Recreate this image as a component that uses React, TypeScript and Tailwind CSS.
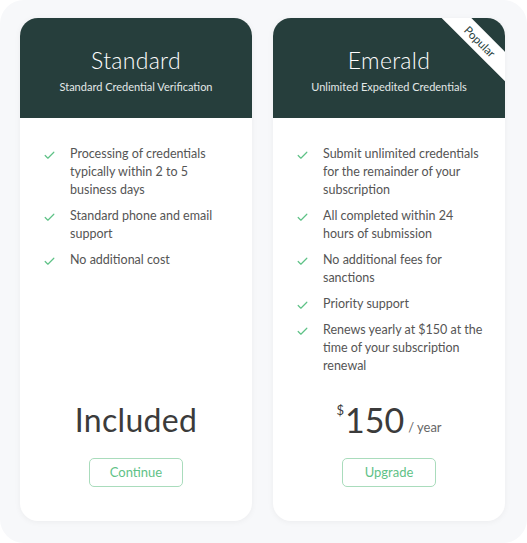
import { Check } from 'lucide-react'

interface Plan {
  name: string
  subtitle: string
  features: string[]
  cta: string
  popular?: boolean
}

const plans: Plan[] = [
  {
    name: 'Standard',
    subtitle: 'Standard Credential Verification',
    features: [
      'Processing of credentials typically within 2 to 5 business days',
      'Standard phone and email support',
      'No additional cost',
    ],
    cta: 'Continue',
  },
  {
    name: 'Emerald',
    subtitle: 'Unlimited Expedited Credentials',
    features: [
      'Submit unlimited credentials for the remainder of your subscription',
      'All completed within 24 hours of submission',
      'No additional fees for sanctions',
      'Priority support',
      'Renews yearly at $150 at the time of your subscription renewal',
    ],
    cta: 'Upgrade',
    popular: true,
  },
]

function PlanCard({ plan }: { plan: Plan }) {
  return (
    <div className="relative flex w-[232px] flex-col overflow-hidden rounded-[18px] bg-white shadow-[0_1px_6px_rgba(0,0,0,0.05)]">
      <div className="flex h-[100px] flex-col items-center justify-center bg-[#263e3c] pt-[4px] text-white">
        <h2 className="text-[23px] font-light leading-[28px] tracking-[0.3px]">{plan.name}</h2>
        <p className="mt-[6px] text-[11px] leading-[14px] text-[#e3e9e8]">{plan.subtitle}</p>
      </div>
      {plan.popular && (
        <div className="absolute right-[-27px] top-[13px] w-[104px] rotate-45 bg-white text-center text-[11.5px] leading-[21px] text-[#263e3c]">
          Popular
        </div>
      )}
      <ul className="flex flex-col gap-[8px] pl-[23px] pr-[20px] pt-[27px]">
        {plan.features.map(f => (
          <li key={f} className="flex items-start gap-[14px]">
            <Check className="mt-[4px] h-[13px] w-[13px] shrink-0 text-[#5fc287]" strokeWidth={2.2} />
            <span className="text-[12.5px] leading-[18px] text-[#555]">{f}</span>
          </li>
        ))}
      </ul>
      <div className="mt-auto flex flex-col items-center pb-[34px]">
        {plan.popular ? (
          <div className="flex items-end text-[#3b3b3b]">
            <span className="mb-[23px] mr-[1px] text-[13px] leading-none">$</span>
            <span className="text-[34px] leading-[40px]">150</span>
            <span className="mb-[6px] ml-[4px] text-[13px] leading-none text-[#666]">/ year</span>
          </div>
        ) : (
          <div className="text-[32px] leading-[40px] tracking-[0.3px] text-[#3b3b3b]">Included</div>
        )}
        <button className="mt-[18px] h-[29px] w-[94px] rounded-[5px] border border-[#a9dcbc] text-[13px] text-[#5fc287]">
          {plan.cta}
        </button>
      </div>
    </div>
  )
}

export default function App() {
  return (
    <div className="flex h-[543px] w-[527px] gap-[21px] rounded-[24px] bg-[#f7f8fa] pb-[22px] pl-[20px] pt-[18px] font-['Lato',sans-serif]">
      {plans.map(p => (
        <PlanCard key={p.name} plan={p} />
      ))}
    </div>
  )
}
